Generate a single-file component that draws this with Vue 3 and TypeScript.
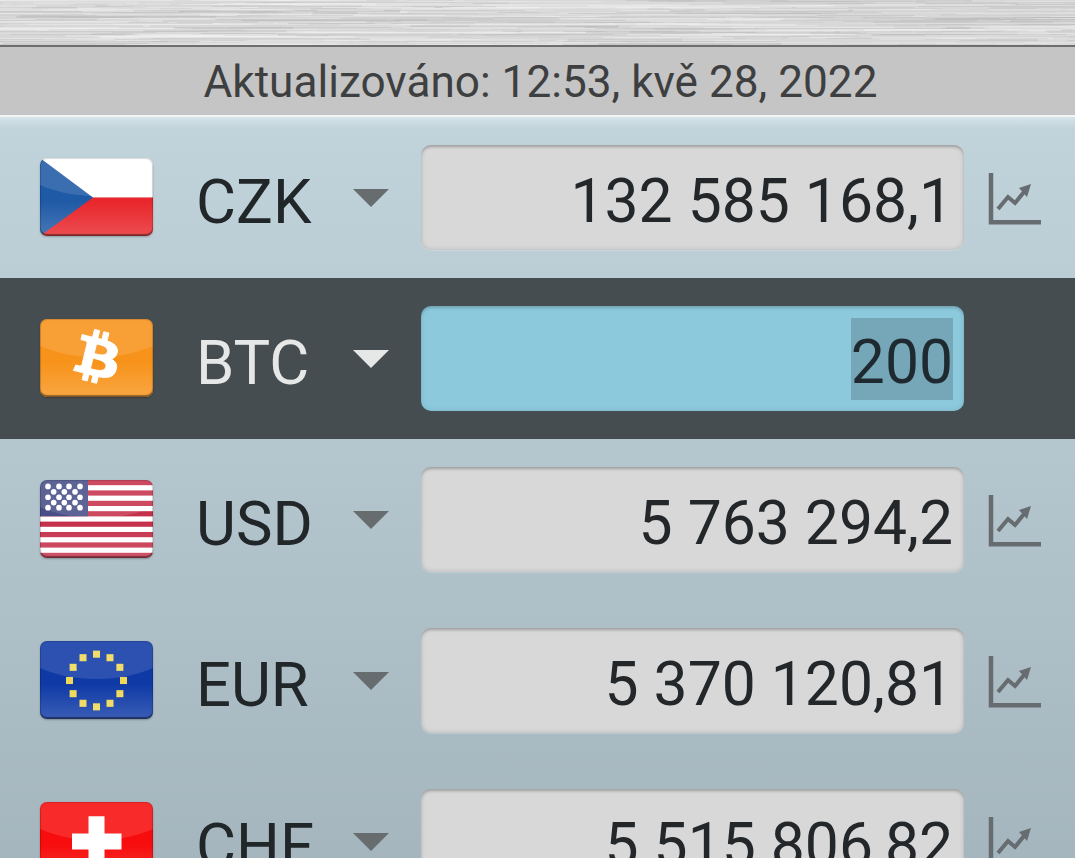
<script setup lang="ts">
type Row = { code: string; value: string; active?: boolean };

const rows: Row[] = [
  { code: "CZK", value: "132 585 168,1" },
  { code: "BTC", value: "200", active: true },
  { code: "USD", value: "5 763 294,2" },
  { code: "EUR", value: "5 370 120,81" },
  { code: "CHF", value: "5 515 806,82" },
];

const usStripes = [0, 2, 4, 6, 8, 10, 12, 14];
const usStars = [6.3, 11.7, 17, 22.3, 27.3].flatMap((y, i) =>
  (i % 2 ? [13.7, 24.3, 35] : [8, 19, 29, 40]).map((x) => ({ x, y })),
);
const euStars = Array.from({ length: 12 }, (_, i) => ({
  x: 56.5 + 27 * Math.sin((i * Math.PI) / 6),
  y: 39 - 26 * Math.cos((i * Math.PI) / 6),
}));

// brushed metal streaks, seeded so the strip is the same on every load
let seed = 41;
const rand = () => {
  seed = (seed * 16807) % 2147483647;
  return seed / 2147483647;
};
const streaks = Array.from({ length: 520 }, () => {
  const light = rand() > 0.45;
  return {
    x: rand() * 1175 - 100,
    y: Math.floor(rand() * 45),
    w: 30 + rand() * 240,
    h: rand() > 0.7 ? 2 : 1,
    fill: light ? "#f4f4f4" : "#b4b4b4",
    opacity: 0.12 + rand() * 0.3,
  };
});
</script>

<template>
  <div class="page">
    <div class="strip">
      <svg class="texture" width="1075" height="45" aria-hidden="true">
        <rect width="1075" height="45" fill="#d8d8d8" />
        <rect
          v-for="(s, i) in streaks"
          :key="i"
          :x="s.x"
          :y="s.y"
          :width="s.w"
          :height="s.h"
          :fill="s.fill"
          :opacity="s.opacity"
        />
      </svg>
    </div>
    <div class="status">Aktualizováno: 12:53, kvě 28, 2022</div>
    <div class="list">
      <div v-for="row in rows" :key="row.code" class="row" :class="{ active: row.active }">
        <div class="flag" :class="row.code.toLowerCase()">
          <svg width="113" height="78" viewBox="0 0 113 77" preserveAspectRatio="none">
            <template v-if="row.code === 'CZK'">
              <rect width="113" height="39" fill="#ffffff" />
              <rect y="39" width="113" height="38" fill="#e8262b" />
              <path d="M0 0L53 39L0 77Z" fill="#1f5aa6" />
            </template>
            <template v-else-if="row.code === 'BTC'">
              <rect width="113" height="77" fill="#f7931a" />
              <path
                transform="translate(58 37.500) rotate(14) scale(0.11 0.1) translate(-192 -256)"
                fill="#ffffff"
                stroke="#ffffff"
                stroke-width="8"
                d="M310.204 242.638c27.73-14.18 45.377-39.39 41.28-81.3-5.358-57.351-52.458-76.573-114.85-81.929V0h-48.528v77.203c-12.605 0-25.525.315-38.444.63V0h-48.528v79.409c-17.842.539-38.622.276-97.37 0v51.678c38.314-.678 58.417-3.14 63.023 21.427v217.429c-2.925 19.492-18.524 16.685-53.255 16.071L3.765 443.68c88.481 0 97.37.315 97.37.315V512h48.528v-67.06c13.234.315 26.154.315 38.444.315V512h48.528v-68.005c81.299-4.412 135.647-24.894 142.895-101.467 5.671-61.446-23.32-88.862-69.326-99.89zM150.608 134.553c27.415 0 113.126-8.507 113.126 48.528 0 54.515-85.71 48.212-113.126 48.212v-96.74zm0 251.776V279.821c32.772 0 133.127-9.138 133.127 53.255-.001 60.186-100.355 53.253-133.127 53.253z"
              />
            </template>
            <template v-else-if="row.code === 'USD'">
              <rect width="113" height="77" fill="#ffffff" />
              <rect
                v-for="s in usStripes"
                :key="s"
                width="113"
                height="5.130"
                :y="s * 5.133"
                fill="#c5304a"
              />
              <rect width="48" height="35.800" fill="#484e88" />
              <circle v-for="(s, i) in usStars" :key="i" :cx="s.x" :cy="s.y" r="2.800" fill="#ffffff" />
            </template>
            <template v-else-if="row.code === 'EUR'">
              <rect width="113" height="77" fill="#0f3aa6" />
              <rect
                v-for="(s, i) in euStars"
                :key="i"
                :x="s.x - 3.500"
                :y="s.y - 3.500"
                width="7"
                height="7"
                fill="#efd957"
              />
            </template>
            <template v-else>
              <rect width="113" height="77" fill="#f70d0d" />
              <path d="M48.500 14H64.500V31H81.500V47H64.500V64H48.500V47H32V31H48.500Z" fill="#ffffff" />
            </template>
          </svg>
        </div>
        <span class="code">{{ row.code }}</span>
        <span class="caret" />
        <div class="field">
          <span class="value" :class="{ selected: row.active }">{{ row.value }}</span>
        </div>
        <svg v-if="!row.active" class="chart" width="55" height="54" viewBox="0 0 55 54" aria-hidden="true">
          <path d="M5 2V51.300H55" fill="none" stroke="#666c70" stroke-width="4.500" />
          <path d="M12 38L22 26L29 32L38 21" fill="none" stroke="#666c70" stroke-width="4" />
          <path d="M33 17L45 13L41 26Z" fill="#666c70" />
        </svg>
      </div>
    </div>
  </div>
</template>

<style scoped>
.page {
  width: 1075px;
  height: 858px;
  overflow: hidden;
  display: flex;
  flex-direction: column;
  font-family: Roboto, "Liberation Sans", sans-serif;
}

.strip {
  flex: none;
  height: 45px;
  overflow: hidden;
}

.texture {
  display: block;
  filter: blur(0.6px);
}

.status {
  flex: none;
  height: 68px;
  padding-left: 6px;
  border-top: 2px solid #6e6e6e;
  border-bottom: 2px solid #f2f5f6;
  background: #c5c5c5;
  color: #3d3f40;
  font-size: 44.150px;
  line-height: 71px;
  text-align: center;
}

.list {
  flex: 1;
  background:
    linear-gradient(#d6e4ea, rgba(214, 228, 234, 0) 12px),
    linear-gradient(#c1d3db, #a2b3bb);
}

.row {
  height: 161px;
  box-sizing: border-box;
  display: flex;
  align-items: center;
  padding: 0 0 0 40px;
  color: #212629;
}

.row.active {
  background: #464d50;
  color: #e6e8e8;
}

.flag {
  position: relative;
  flex: none;
  width: 113px;
  height: 78px;
  margin-bottom: 2px;
  border-radius: 7px;
  overflow: hidden;
  box-shadow: 0 1px 2px rgba(0, 0, 0, 0.25);
}

.flag svg {
  display: block;
  filter: blur(0.4px);
}

.flag::before {
  content: "";
  position: absolute;
  z-index: 1;
  left: -30%;
  top: -62px;
  width: 160%;
  height: 100px;
  border-radius: 50%;
  background: rgba(255, 255, 255, 0.12);
}

.flag::after {
  content: "";
  position: absolute;
  z-index: 1;
  inset: 0;
  border-radius: 7px;
  background: linear-gradient(rgba(255, 255, 255, 0) 55%, rgba(255, 255, 255, 0.18));
  box-shadow:
    inset 0 -2px 1px rgba(0, 0, 0, 0.4),
    inset 0 0 1px 1px rgba(0, 0, 0, 0.15);
}

.code {
  flex: none;
  width: 157px;
  margin-left: 43px;
  font-size: 61.500px;
  line-height: 1;
  position: relative;
  top: 5px;
}

.caret {
  flex: none;
  width: 0;
  height: 0;
  margin-right: 32px;
  border-left: 18px solid transparent;
  border-right: 18px solid transparent;
  border-top: 18px solid #676c6f;
}

.active .caret {
  border-top-color: #e6e8e8;
}

.field {
  flex: none;
  width: 543px;
  height: 105px;
  box-sizing: border-box;
  padding-right: 11px;
  display: flex;
  align-items: center;
  justify-content: flex-end;
  border-radius: 10px;
  background: #d8d8d8;
  box-shadow:
    inset 0 3px 3px -1px rgba(0, 0, 0, 0.2),
    inset 0 0 5px rgba(0, 0, 0, 0.16),
    0 1px 1px rgba(255, 255, 255, 0.2);
  color: #24272a;
  font-size: 60.600px;
}

.active .field {
  background: #8cc9dd;
  color: #1f2a30;
  box-shadow:
    inset 0 3px 3px -1px rgba(0, 0, 0, 0.14),
    inset 0 0 5px rgba(0, 0, 0, 0.12);
}

.value {
  display: block;
  height: 82px;
  line-height: 90px;
}

.selected {
  background: #76a7b9;
}

.chart {
  flex: none;
  margin: 1px 0 0 22px;
}
</style>

<style>
html,
body {
  margin: 0;
  overflow: hidden;
}
</style>
